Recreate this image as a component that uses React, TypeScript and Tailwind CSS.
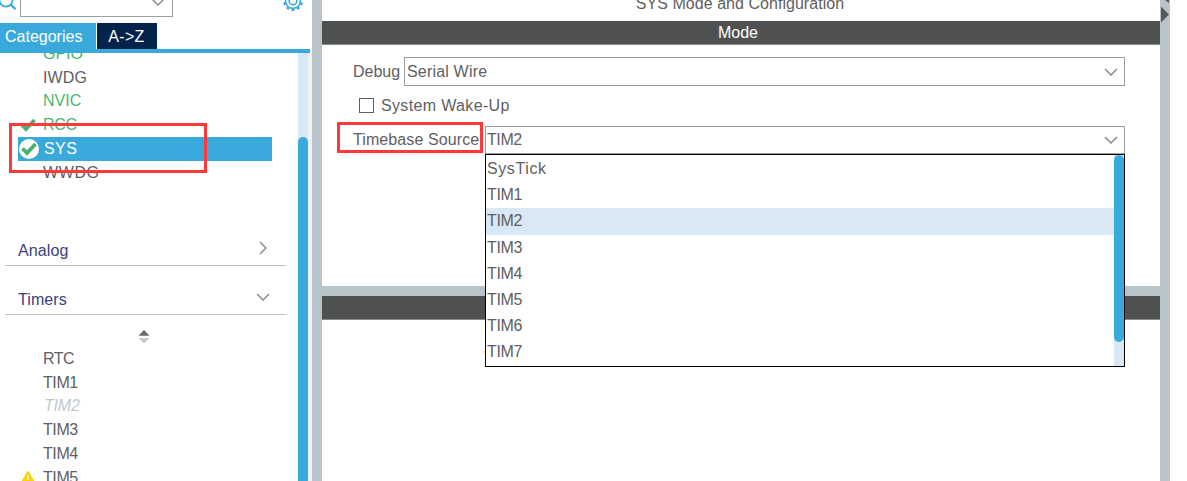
import type { ReactNode } from "react";

function Chevron({ className = "", right = false }: { className?: string; right?: boolean }) {
  return right ? (
    <svg className={className} width="8" height="14" viewBox="0 0 8 14" fill="none" stroke="#8b8b8b" strokeWidth="1.5">
      <path d="M1 1 L7 7 L1 13" />
    </svg>
  ) : (
    <svg className={className} width="14" height="8" viewBox="0 0 14 8" fill="none" stroke="#8b8b8b" strokeWidth="1.5">
      <path d="M1 1 L7 7 L13 1" />
    </svg>
  );
}

function Check() {
  return (
    <svg width="16" height="14" viewBox="0 0 16 14" fill="none" stroke="#48b072" strokeWidth="3.8">
      <path d="M1.5 6.5 L6 11 L14.5 2" />
    </svg>
  );
}

function Gear() {
  const teeth = Array.from({ length: 10 }, (_, i) => i * 36);
  return (
    <svg width="22" height="22" viewBox="-11 -11 22 22" fill="none" stroke="#39a9dc">
      <circle r="7.4" strokeWidth="1.6" />
      <circle r="3.8" strokeWidth="1.6" />
      {teeth.map((a) => (
        <path key={a} d="M-1.4 -8.9 H1.4" strokeWidth="2.2" transform={`rotate(${a})`} />
      ))}
    </svg>
  );
}

function Warning() {
  return (
    <svg width="16" height="14" viewBox="0 0 16 14">
      <path d="M8 1 L15 13 H1 Z" fill="#ffd200" stroke="#ffd200" strokeWidth="1.8" strokeLinejoin="round" />
      <path d="M8 4.5 V9 M8 10.5 V12" stroke="#fff" strokeWidth="1.5" />
    </svg>
  );
}

function Item({ label, tone = "text-[#5f6062]", icon }: { label: string; tone?: string; icon?: ReactNode }) {
  return (
    <li className="flex h-[23.8px] shrink-0 items-center">
      <span className="flex w-[43px] justify-end pr-[7px]">{icon}</span>
      <span className={tone}>{label}</span>
    </li>
  );
}

function Group({ label, open = false }: { label: string; open?: boolean }) {
  return (
    <div className="ml-[5px] flex h-[49px] w-[281px] shrink-0 items-end justify-between border-b border-[#b9c4ca] pr-[16px] pl-[13px] text-[#39427a]">
      <span className="pb-[4px] tracking-[0.1px]">{label}</span>
      {open ? <Chevron className="mb-[13px]" /> : <Chevron right className="mr-[3px] mb-[10px]" />}
    </div>
  );
}

function Combo({ value, className }: { value: string; className: string }) {
  return (
    <div className={`flex items-center justify-between border border-[#98a0a5] bg-white pr-[6px] ${className}`}>
      <span>{value}</span>
      <Chevron />
    </div>
  );
}

const options = ["SysTick", "TIM1", "TIM2", "TIM3", "TIM4", "TIM5", "TIM6", "TIM7"];

function Sidebar() {
  return (
    <aside className="flex w-[312px] shrink-0 flex-col">
      <div className="flex h-[23px] shrink-0 items-start overflow-hidden">
        <svg className="shrink-0" width="20" height="12" viewBox="0 0 20 12" fill="none" stroke="#39a9dc" strokeWidth="1.8">
          <circle cx="6" cy="0" r="6.6" />
          <path d="M10.5 4.5 L15.5 9.2" strokeWidth="2.4" />
        </svg>
        <div className="flex h-[17px] w-[153px] shrink-0 items-start justify-end border border-t-0 border-[#98a0a5] pr-[7px]">
          <Chevron className="-mt-[2px]" />
        </div>
        <div className="-mt-[10px] ml-[109px]">
          <Gear />
        </div>
      </div>
      <div className="flex h-[26px] shrink-0 gap-px text-white">
        <div className="flex w-[96px] items-center bg-[#39a9dc] pt-px pl-[5px]">Categories</div>
        <div className="flex w-[60px] items-center justify-center bg-[#03234b] pt-px pr-px tracking-[0.3px]">A-&gt;Z</div>
      </div>
      <div className="h-[4px] w-[310px] shrink-0 bg-[#39a9dc]" />
      <div className="flex min-h-0 flex-1">
        <div className="flex w-[298px] flex-col overflow-hidden">
          <ul className="-mt-[11px] flex shrink-0 flex-col">
            <Item label="GPIO" tone="text-[#4bb576]" />
            <Item label="IWDG" tone="text-[#5f6062] tracking-[0.1px]" />
            <Item label="NVIC" tone="text-[#4bb576]" />
            <Item label="RCC" tone="text-[#4bb576] tracking-[-0.3px]" icon={<Check />} />
            <li className="ml-[18px] flex h-[24px] w-[254px] items-center bg-[#39a9dc] pl-[1px] text-white">
              <span className="mr-[5px] flex size-[20px] items-center justify-center rounded-full bg-white">
                <Check />
              </span>
              <span className="tracking-[0.4px]">SYS</span>
            </li>
            <Item label="WWDG" tone="text-[#5f6062] tracking-[0.6px]" />
          </ul>
          <div className="h-[32px] shrink-0" />
          <Group label="Analog" />
          <Group label="Timers" open />
          <div className="flex h-[32px] shrink-0 items-start pt-[15px] pl-[138px]">
            <svg width="12" height="14" viewBox="0 0 12 14">
              <path d="M6 0 L11.5 5.8 H0.5 Z" fill="#696969" />
              <path d="M0.5 8 H11.5 L6 13.5 Z" fill="#c5c5c5" />
            </svg>
          </div>
          <ul className="flex shrink-0 flex-col">
            <Item label="RTC" tone="text-[#5f6062] tracking-[-0.5px]" />
            <Item label="TIM1" tone="text-[#5f6062] tracking-[-0.4px]" />
            <Item label="TIM2" tone="italic pl-px text-[#c0c8cd] tracking-[-0.2px]" />
            <Item label="TIM3" tone="text-[#5f6062] tracking-[-0.4px]" />
            <Item label="TIM4" tone="text-[#5f6062] tracking-[-0.4px]" />
            <Item label="TIM5" tone="text-[#5f6062] tracking-[-0.4px]" icon={<Warning />} />
          </ul>
        </div>
        <div className="w-[10px] bg-[#d9e8f5] pt-[84px]">
          <div className="h-full rounded-t-full bg-[#39a9dc]" />
        </div>
        <div className="w-[4px] bg-[#eff1f5]" />
      </div>
    </aside>
  );
}

export default function App() {
  return (
    <div className="relative flex h-[481px] w-[1187px] overflow-hidden bg-white font-['Liberation_Sans',Arial,sans-serif] text-[16px] leading-[20px] whitespace-nowrap text-[#5f6062]">
      <Sidebar />
      <div className="w-[10px] shrink-0 bg-[#b9c4ca]" />
      <main className="flex w-[838px] shrink-0 flex-col">
        <div className="flex h-[21px] shrink-0 justify-center overflow-hidden">
          <h1 className="-mt-[6px] pr-[2px] tracking-[0.04px]">SYS Mode and Configuration</h1>
        </div>
        <h2 className="flex h-[24px] shrink-0 items-center justify-center border-b border-[#8a8c8c] bg-[#4f5251] pr-[6px] text-white">Mode</h2>
        <section className="flex h-[241px] shrink-0 flex-col pt-[12px] pl-[31px]">
          <div className="flex h-[29px] items-center">
            <span className="w-[51px]">Debug</span>
            <Combo value="Serial Wire" className="h-[29px] w-[721px] pl-[2px] tracking-[0.18px]" />
          </div>
          <div className="mt-[10px] flex h-[19px] items-center pl-[6px] tracking-[0.35px]">
            <span className="mr-[7px] size-[15px] border border-[#5f6062]" />
            System Wake-Up
          </div>
          <div className="mt-[11px] flex h-[28px] items-center">
            <span className="w-[132px] tracking-[0.1px]">Timebase Source</span>
            <Combo value="TIM2" className="h-[28px] w-[640px] pl-[1px] tracking-[-0.4px]" />
          </div>
        </section>
        <div className="h-[10px] shrink-0 bg-[#b9c4ca]" />
        <div className="h-[24px] shrink-0 border-b border-[#8a8c8c] bg-[#4f5251]" />
      </main>
      <div className="w-[10px] shrink-0 bg-[#b9c4ca]">
        <svg width="10" height="24" viewBox="0 0 10 24" fill="#575959">
          <path d="M5 0 H9 V3 Z" />
          <path d="M1 6.5 L9 14.5 L1 22.5 Z" />
        </svg>
      </div>

      <div className="absolute top-[349px] left-[484px] size-[6px] rounded-full bg-[#ffd84d]" />
      <div className="absolute top-[154px] left-[485px] flex h-[213px] w-[640px] border border-black bg-white">
        <ul className="flex flex-1 flex-col pt-px">
          {options.map((o) => (
            <li
              key={o}
              className={`flex h-[26.2px] shrink-0 items-center pl-[1px] ${o === "SysTick" ? "tracking-[0.6px]" : "tracking-[-0.35px]"} ${o === "TIM2" ? "bg-[#d9e8f5]" : ""}`}
            >
              {o}
            </li>
          ))}
        </ul>
        <div className="w-[10px] bg-[#d9e8f5]">
          <div className="h-[187px] rounded-full bg-[#39a9dc]" />
        </div>
      </div>
      <div className="absolute top-[123px] left-[9px] h-[50px] w-[198px] border-3 border-[#ff3838]" />
      <div className="absolute top-[122px] left-[337px] h-[31px] w-[146px] border-3 border-[#ff3838]" />
    </div>
  );
}
